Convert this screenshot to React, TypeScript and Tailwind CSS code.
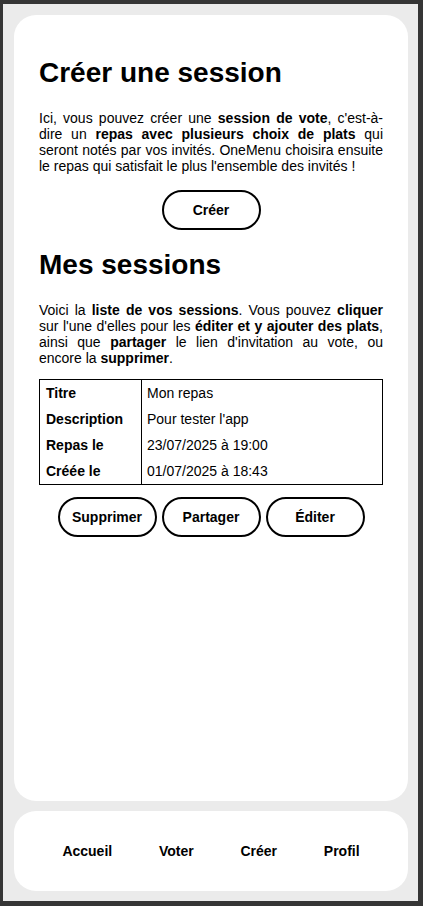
import React from "react";

const font = "font-['Liberation_Sans',Arial,sans-serif]";

function PillButton({ children }: { children: React.ReactNode }) {
  return (
    <button className="w-[99px] h-[40px] border-2 border-black rounded-full bg-white text-black font-bold text-[14px] leading-[16px] flex items-center justify-center">
      {children}
    </button>
  );
}

const rows: [string, string][] = [
  ["Titre", "Mon repas"],
  ["Description", "Pour tester l'app"],
  ["Repas le", "23/07/2025 à 19:00"],
  ["Créée le", "01/07/2025 à 18:43"],
];

export default function App() {
  return (
    <div className={`${font} w-[423px] h-[906px] bg-[#353535] pl-[3px] pt-[4px] pr-[5px] pb-[5px] text-black`}>
      <div className="h-full bg-[#ebebeb] pl-[11px] pt-[11px] pr-[10px] pb-[10px] flex flex-col gap-[10px]">
        <main className="flex-1 bg-white rounded-[22px] px-[25px] pt-[42px]">
          <h1 className="text-[28px] leading-[32px] font-bold">Créer une session</h1>
          <p className="mt-[21px] text-[14px] leading-[16px] text-justify">
            Ici, vous pouvez créer une <b>session de vote</b>, c'est-à-dire un{" "}
            <b>repas avec plusieurs choix de plats</b> qui seront notés par vos invités. OneMenu
            choisira ensuite le repas qui satisfait le plus l'ensemble des invités !
          </p>
          <div className="mt-[16px] flex justify-center">
            <PillButton>Créer</PillButton>
          </div>
          <h1 className="mt-[19px] text-[28px] leading-[32px] font-bold">Mes sessions</h1>
          <p className="mt-[21px] text-[14px] leading-[16px] text-justify">
            Voici la <b>liste de vos sessions</b>. Vous pouvez <b>cliquer</b> sur l'une d'elles
            pour les <b>éditer et y ajouter des plats</b>, ainsi que <b>partager</b> le lien
            d'invitation au vote, ou encore la <b>supprimer</b>.
          </p>
          <div className="mt-[13px] border border-black grid grid-cols-[102px_1fr] text-[14px] leading-[16px]">
            {rows.map(([k, v]) => (
              <React.Fragment key={k}>
                <div className="h-[26px] pl-[6px] flex items-center font-bold border-r border-black">
                  {k}
                </div>
                <div className="h-[26px] pl-[5px] flex items-center">{v}</div>
              </React.Fragment>
            ))}
          </div>
          <div className="mt-[12px] flex justify-center gap-[5px]">
            <PillButton>Supprimer</PillButton>
            <PillButton>Partager</PillButton>
            <PillButton>Éditer</PillButton>
          </div>
        </main>
        <nav className="h-[80px] shrink-0 bg-white rounded-[22px] px-[25px] flex items-center justify-around text-[14px] leading-[16px] font-bold">
          <span>Accueil</span>
          <span>Voter</span>
          <span>Créer</span>
          <span>Profil</span>
        </nav>
      </div>
    </div>
  );
}
